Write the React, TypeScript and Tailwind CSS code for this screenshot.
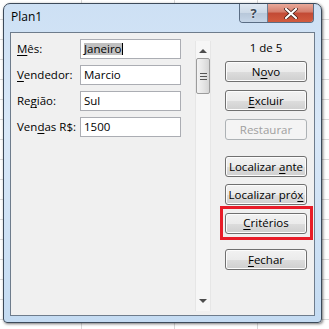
import React from 'react';
import clsx from 'clsx';

const font = "font-['Segoe_UI','Open_Sans','Liberation_Sans',sans-serif]";

const fields = [
    { pre: '', key: 'M', post: 'ês:', value: 'Janeiro', selected: true },
    { pre: '', key: 'V', post: 'endedor:', value: 'Marcio' },
    { pre: 'Re', key: 'g', post: 'ião:', value: 'Sul' },
    { pre: 'Ven', key: 'd', post: 'as R$:', value: '1500' },
];

const Key = ({ children }: { children: React.ReactNode }) => (
    <span className="underline underline-offset-2 decoration-1">{children}</span>
);

// Win7 style push button
const Btn = ({ children, disabled, className }: { children: React.ReactNode; disabled?: boolean; className?: string }) => (
    <div
        className={clsx(
            'h-[21px] w-[82px] shrink-0 flex items-center justify-center rounded-[3px] border text-[11.5px] leading-none',
            disabled
                ? 'border-[#adb2b5] bg-[#f4f4f4] text-[#a0a0a0]'
                : 'border-[#707070] text-black bg-[linear-gradient(#f2f2f2_0%,#ebebeb_50%,#dddddd_51%,#cfcfcf_100%)] shadow-[inset_0_0_0_1px_#fcfcfc]',
            className
        )}
    >
        <span className="whitespace-pre">{children}</span>
    </div>
);

const App = () => {
    return (
        <div
            className={clsx(
                'w-[329px] h-[329px] p-[3px] bg-white overflow-hidden',
                'bg-[linear-gradient(90deg,transparent_81px,#d9d9d9_81px,#d9d9d9_82px,transparent_82px,transparent_174px,#d9d9d9_174px,#d9d9d9_175px,transparent_175px,transparent_257px,#d9d9d9_257px,#d9d9d9_258px,transparent_258px),linear-gradient(transparent_19px,#d9d9d9_19px)]',
                'bg-[length:329px_329px,329px_20px]',
                font
            )}
        >
            {/* Window frame */}
            <div className="w-[319px] h-[320px] rounded-t-[7px] rounded-b-[4px] border border-[#3c4a5a] bg-[linear-gradient(180deg,#cde0f4_0%,#d9e8f8_40%,#c4dbf2_100%)] shadow-[1px_1px_3px_rgba(0,0,0,0.55)] flex flex-col">
                {/* Title bar */}
                <div className="h-[28px] flex items-start pl-[7px] pr-[7px]">
                    <span className="mt-[7px] text-[12px] text-black leading-none">Plan1</span>
                    <div className="ml-auto flex h-[19px] border border-t-0 border-[#5a6d84] rounded-b-[4px] overflow-hidden">
                        <div className="w-[28px] flex items-center justify-center bg-[linear-gradient(#dfe8f2_0%,#cbd8e6_50%,#b7c7d9_51%,#c6d6e8_100%)] border-r border-[#6f7f93]">
                            <span className="text-[13px] font-bold text-[#3d4a58] leading-none [text-shadow:0_0_2px_#fff]">?</span>
                        </div>
                        <div className="w-[45px] flex items-center justify-center bg-[linear-gradient(#e9a99a_0%,#d47d6b_45%,#c24a35_50%,#d25b3e_100%)]">
                            <svg width="14" height="11" viewBox="0 0 14 11">
                                <path d="M2 1 L12 10 M12 1 L2 10" stroke="#3a1a14" strokeWidth="3.6" strokeLinecap="round" />
                                <path d="M2 1 L12 10 M12 1 L2 10" stroke="#ffffff" strokeWidth="2.2" strokeLinecap="round" />
                            </svg>
                        </div>
                    </div>
                </div>

                {/* Client area */}
                <div className="ml-[6px] w-[305px] h-[284px] border border-[#6e7c8c] bg-[#f0f0f0] flex text-[11.5px] text-black">
                    {/* Fields */}
                    <div className="pl-[6px] pt-[6px] flex flex-col gap-[6px]">
                        {fields.map((f) => (
                            <div key={f.value} className="flex items-center h-[20px]">
                                <span className="w-[63px] leading-none whitespace-pre">
                                    {f.pre}
                                    <Key>{f.key}</Key>
                                    {f.post}
                                </span>
                                <div className="w-[101px] h-[20px] border border-[#abadb3] bg-white flex items-center pl-[3px] leading-none">
                                    {f.selected ? (
                                        <span className="bg-[#c0c0c0] border-r border-black">{f.value}</span>
                                    ) : (
                                        <span>{f.value}</span>
                                    )}
                                </div>
                            </div>
                        ))}
                    </div>

                    {/* Scrollbar */}
                    <div className="ml-[14px] mt-[8px] w-[16px] h-[270px] bg-[#f6f6f6] border-x border-[#e6e6e6] flex flex-col items-center">
                        <svg width="8" height="5" viewBox="0 0 8 5" className="mt-[8px]">
                            <path d="M0 4 L4 0 L8 4 Z" fill="#4d4d4d" />
                        </svg>
                        <div className="mt-[4px] w-[14px] h-[36px] rounded-[2px] border border-[#9c9c9c] bg-[linear-gradient(90deg,#f3f3f3,#e6e6e6_50%,#d6d6d6)] flex flex-col items-center justify-center gap-[2px]">
                            <div className="w-[7px] h-[1px] bg-[#555]" />
                            <div className="w-[7px] h-[1px] bg-[#555]" />
                            <div className="w-[7px] h-[1px] bg-[#555]" />
                        </div>
                        <svg width="8" height="5" viewBox="0 0 8 5" className="mt-auto mb-[7px]">
                            <path d="M0 0 L8 0 L4 4 Z" fill="#4d4d4d" />
                        </svg>
                    </div>

                    {/* Buttons */}
                    <div className="ml-[14px] w-[82px] flex flex-col items-center">
                        <div className="mt-[9px] h-[12px] leading-none">1 de 5</div>
                        <Btn className="mt-[7px]">
                            N<Key>o</Key>vo
                        </Btn>
                        <Btn className="mt-[8px]">
                            <Key>E</Key>xcluir
                        </Btn>
                        <Btn className="mt-[8px]" disabled>
                            Restaurar
                        </Btn>
                        <Btn className="mt-[16px]">
                            {'Localizar '}<Key>a</Key>nte
                        </Btn>
                        <Btn className="mt-[7px]">
                            Localizar pró<Key>x</Key>
                        </Btn>
                        <div className="mt-[1px] -mx-[6px] w-[93px] h-[34px] shrink-0 border-[3px] border-[#e81c28] flex items-center justify-center">
                            <Btn>
                                <Key>C</Key>ritérios
                            </Btn>
                        </div>
                        <Btn className="mt-[9px]">
                            <Key>F</Key>echar
                        </Btn>
                    </div>
                </div>
            </div>
        </div>
    );
};

export default App;
